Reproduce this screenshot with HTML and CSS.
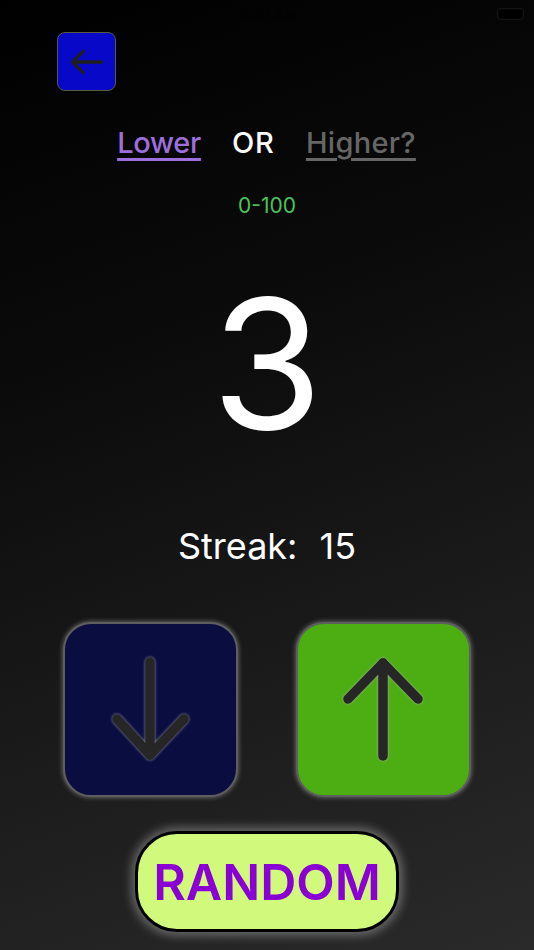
FILE: index.html
```html
<!DOCTYPE html>
<html>
<head>
<meta charset="utf-8">
<link rel="stylesheet" href="styles.css">
</head>
<body>
<div class="screen">
  <div class="status">
    <span class="time">10:41 AM</span>
    <span class="battery"><span class="battery-fill"></span></span>
  </div>
  <div class="top">
    <button class="back">
      <svg width="59" height="59" viewBox="0 0 59 59"><g fill="none" stroke="#1e1e1e" stroke-width="3.6" stroke-linecap="round" stroke-linejoin="round"><line x1="15" y1="29" x2="45" y2="29"/><polyline points="26,18 15,29 26,40"/></g></svg>
    </button>
  </div>
  <div class="title">
    <span class="lower">Lower</span>
    <span class="or">OR</span>
    <span class="higher">Higher?</span>
  </div>
  <div class="range">0-100</div>
  <div class="number">3</div>
  <div class="streak"><span>Streak:</span><span>15</span></div>
  <div class="choices">
    <button class="choice down">
      <svg width="175" height="175" viewBox="0 0 175 175"><g fill="none" stroke="#262626" stroke-width="9.5" stroke-linecap="round" stroke-linejoin="round"><line x1="87" y1="40" x2="87" y2="133"/><polyline points="54,97 87,133 121,97"/></g></svg>
    </button>
    <button class="choice up">
      <svg width="175" height="175" viewBox="0 0 175 175"><g fill="none" stroke="#262626" stroke-width="9.5" stroke-linecap="round" stroke-linejoin="round"><line x1="87" y1="134" x2="87" y2="41"/><polyline points="52,77 87,41 122,77"/></g></svg>
    </button>
  </div>
  <button class="random">RANDOM</button>
</div>
</body>
</html>
```

FILE: styles.css
```css
* { box-sizing: border-box; }
html, body { margin: 0; padding: 0; }
body {
  width: 534px;
  height: 950px;
  overflow: hidden;
  font-family: Inter, "Noto Sans", sans-serif;
  background: linear-gradient(160deg, #000 0%, #0b0b0b 35%, #1c1c1c 70%, #2a2a2a 100%);
}
.screen {
  display: flex;
  flex-direction: column;
  align-items: center;
  height: 950px;
}
.status {
  width: 100%;
  height: 28px;
  display: flex;
  align-items: center;
  justify-content: center;
  position: relative;
}
.time {
  font-size: 14px;
  color: #020202;
  font-weight: 500;
}
.battery {
  position: absolute;
  right: 10px;
  top: 8px;
  width: 27px;
  height: 12px;
  border: 1px solid #141414;
  border-radius: 3px;
  padding: 1px;
}
.battery-fill { display: block; width: 100%; height: 100%; background: #000; border-radius: 2px; }
.top {
  width: 100%;
  padding-left: 57px;
  margin-top: 4px;
  display: flex;
}
.back {
  width: 59px;
  height: 59px;
  padding: 0;
  border: 1px solid #5a5a40;
  border-radius: 8px;
  background: #0808c8;
  display: flex;
}
.title {
  margin-top: 34px;
  display: flex;
  gap: 31px;
  font-size: 29px;
  line-height: 36px;
  font-weight: 500;
  padding-right: 1px;
}
.title span {
  text-decoration-thickness: 3px;
  text-underline-offset: 5px;
}
.lower { color: #9d6fdc; text-decoration: underline; letter-spacing: -0.3px; }
.or { color: #fff; letter-spacing: 1px; }
.higher { color: #666; text-decoration: underline; letter-spacing: 0.3px; }
.range {
  margin-top: 32px;
  font-size: 21px;
  line-height: 26px;
  color: #4cc35a;
}
.number {
  margin-top: 53px;
  font-size: 180px;
  line-height: 184px;
  color: #fff;
  font-weight: 400;
}
.streak {
  margin-top: 68px;
  font-size: 36px;
  line-height: 44px;
  color: #fff;
  display: flex;
  gap: 22px;
}
.choices {
  margin-top: 54px;
  display: flex;
  gap: 58px;
}
.choice {
  width: 175px;
  height: 175px;
  padding: 0;
  border: 2px solid #5e5e5e;
  border-radius: 28px;
  box-shadow: 0 0 4px 1px rgba(150,150,150,0.55);
  display: flex;
}
.choice svg { margin: -2px; filter: drop-shadow(0 0 1.5px rgba(170,170,170,0.9)); }
.down { background: #0a0d40; }
.up { background: #4cae12; }
.random {
  margin-top: 34px;
  width: 264px;
  height: 101px;
  border: 3px solid #000;
  border-radius: 42px;
  background: #d1fa7c;
  color: #8a00d4;
  font-family: Inter, "Noto Sans", sans-serif;
  font-size: 50px;
  font-weight: 600;
  box-shadow: 0 0 10px 4px rgba(255,255,255,0.3);
  padding: 0;
}
```
